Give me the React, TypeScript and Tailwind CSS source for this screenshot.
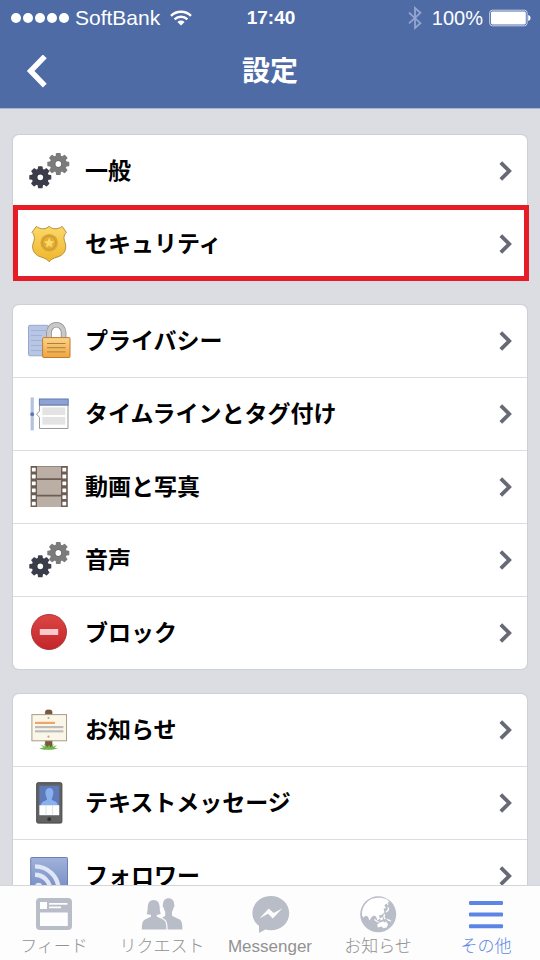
import { ReactNode } from "react";
import clsx from "clsx";

const TOOTH_ANGLES = [0, 45, 90, 135, 180, 225, 270, 315];

function Gear({ x, y, fill }: { x: number; y: number; fill: string }) {
  return (
    <g transform={`translate(${x} ${y})`}>
      <circle r="5.7" fill="none" stroke={fill} strokeWidth="5.6" />
      {TOOTH_ANGLES.map((angle) => (
        <path key={angle} d="M-2.8 -7 L-2.3 -10.4 Q-2.2 -11 -1.6 -11 H1.6 Q2.2 -11 2.3 -10.4 L2.8 -7Z" fill={fill} transform={`rotate(${angle})`} />
      ))}
      <circle r="3.4" fill="none" stroke="#00000022" strokeWidth="1" />
    </g>
  );
}

function GearsIcon() {
  return (
    <svg viewBox="0 0 44 44" className="size-11">
      <Gear x={31.3} y={15} fill="#7b7b7c" />
      <Gear x={13.3} y={28.3} fill="#3b3d4b" />
    </svg>
  );
}

function BadgeIcon() {
  return (
    <svg viewBox="0 0 44 44" className="size-11">
      <defs>
        <linearGradient id="badge" x1="0" y1="0" x2="0" y2="1">
          <stop offset="0" stopColor="#fbd96a" />
          <stop offset="1" stopColor="#efb52c" />
        </linearGradient>
      </defs>
      <path
        d="M22.2 4.2 C19.5 7.4 13.5 7.8 9.3 4.4 L5 10.4 C8.2 13.5 7.8 17 6.2 21 C4 28.5 8.5 33.6 14.5 35.2 C18 36.2 20.8 37.6 22.2 39.8 C23.6 37.6 26.4 36.2 29.9 35.2 C35.9 33.6 40.4 28.5 38.2 21 C36.6 17 36.2 13.5 39.4 10.4 L35.1 4.4 C30.9 7.8 24.9 7.4 22.2 4.2Z"
        fill="url(#badge)"
        stroke="#b78f3a"
        strokeWidth="1"
      />
      <circle cx="22.2" cy="20.8" r="8.8" fill="#d9a632" />
      <circle cx="22.2" cy="20.8" r="6.6" fill="#e3ae33" stroke="#c4942c" strokeWidth=".7" />
      <path d="M22.2 15.6 L23.7 19.1 L27.5 19.4 L24.6 21.9 L25.5 25.6 L22.2 23.6 L18.9 25.6 L19.8 21.9 L16.9 19.4 L20.7 19.1Z" fill="#fcd968" />
    </svg>
  );
}

function PrivacyIcon() {
  return (
    <svg viewBox="0 0 44 44" className="size-11">
      <defs>
        <linearGradient id="lock" x1="0" y1="0" x2="0" y2="1">
          <stop offset="0" stopColor="#fcd389" />
          <stop offset="1" stopColor="#f1a540" />
        </linearGradient>
      </defs>
      <rect x="1.5" y="6.3" width="20" height="30.5" rx="1.5" fill="#b8c6e3" stroke="#95a7cf" />
      <path d="M4 11.5H19M4 16.5H15M4 21.5H15M4 26.5H15M4 31.5H15" stroke="#9fb1d8" strokeWidth="1.2" />
      <path d="M22 20V13.5a7.3 7.8 0 0 1 14.6 0V20" fill="none" stroke="#8f8f8f" strokeWidth="5.6" />
      <path d="M22 20V13.5a7.3 7.8 0 0 1 14.6 0V20" fill="none" stroke="#c9c9c9" strokeWidth="4" />
      <rect x="15.6" y="18.6" width="27.4" height="19.9" rx="1" fill="url(#lock)" stroke="#bb7d34" />
      <path d="M20 24.5H38.5M20 28.7H38.5M20 32.9H38.5" stroke="#a8803f" strokeWidth="1" />
    </svg>
  );
}

function TimelineIcon() {
  return (
    <svg viewBox="0 0 44 44" className="size-11">
      <rect x="3.6" y="5.4" width="3.2" height="33" fill="#b4c2df" />
      <circle cx="5.2" cy="22.2" r="1.9" fill="#5876b4" />
      <path d="M12.5 13V19L9.6 22.2L12.5 25.4V36.5H41V13Z" fill="#fdfdfd" stroke="#9a9a9a" strokeWidth="1" />
      <rect x="12.4" y="7" width="28.8" height="6" fill="#8ea3d3" stroke="#6079b2" strokeWidth="1" />
      <rect x="15.4" y="15.4" width="22.8" height="7.6" fill="#e3e3e3" />
      <rect x="15.4" y="25" width="22.8" height="7.6" fill="#e3e3e3" />
    </svg>
  );
}

const FILM_HOLES = [2.8, 9.6, 16.4, 23.4, 30.2, 36.8];

function FilmIcon() {
  return (
    <svg viewBox="0 0 44 44" className="size-11">
      <rect x="3.6" y="1" width="37.2" height="41" fill="#6c5d55" />
      <path d="M10 1.5H34V13.2H10ZM10 15H34V29.8H10ZM10 31.6H34V42H10Z" fill="#bbaea5" />
      {FILM_HOLES.map((y) => (
        <g key={y} fill="#fff">
          <rect x="4.9" y={y} width="3.8" height="3.8" rx=".6" />
          <rect x="35.4" y={y} width="3.8" height="3.8" rx=".6" />
        </g>
      ))}
    </svg>
  );
}

function BlockIcon() {
  return (
    <svg viewBox="0 0 44 44" className="size-11">
      <defs>
        <linearGradient id="block" x1="0" y1="0" x2="0" y2="1">
          <stop offset="0" stopColor="#dc4644" />
          <stop offset="1" stopColor="#c3262a" />
        </linearGradient>
      </defs>
      <circle cx="22" cy="21" r="17.5" fill="url(#block)" stroke="#a62f2f" strokeWidth=".9" />
      <rect x="12.8" y="18" width="18.4" height="6" fill="#fbc9cc" />
    </svg>
  );
}

function SignIcon() {
  return (
    <svg viewBox="0 0 44 44" className="size-11">
      <path d="M18.4 40V4Q18.4 2 20.4 2H23Q25 2 25 4V40Z" fill="#7b573c" stroke="#5d4330" strokeWidth=".6" />
      <rect x="4.9" y="6.6" width="34.6" height="26.2" fill="#faf6e8" stroke="#a79d89" strokeWidth="1" />
      <rect x="8" y="13.8" width="20" height="2.2" fill="#f2a468" />
      <rect x="8" y="18" width="28.4" height="2.2" fill="#bcbcbc" />
      <rect x="8" y="22.2" width="28.4" height="2.2" fill="#bcbcbc" />
      <circle cx="21.5" cy="10" r="1.1" fill="#c4a774" />
      <circle cx="21.5" cy="28.7" r="1.1" fill="#c4a774" />
      <path d="M12 40.5L16.6 39.6L13.4 36.6L18 38.8L17.2 35.4L20.4 39L22 37L23.6 39.2L26.6 35.6L26 38.8L30 37L27.4 39.8L31 40.4L25 41.8H17Z" fill="#6fb44c" />
    </svg>
  );
}

function PhoneIcon() {
  return (
    <svg viewBox="0 0 44 44" className="size-11">
      <rect x="9.7" y="1.7" width="25.2" height="40.4" rx="1.4" fill="#626262" stroke="#474747" />
      <rect x="12.4" y="4.8" width="19.8" height="29.4" fill="#5d7abb" />
      <path d="M14 24.2C14.4 20.6 17.4 20 20 19C20.4 17.6 18.4 15 18.4 11.8C18.4 8.8 20 7 22.4 7C24.8 7 26.4 8.8 26.4 11.8C26.4 15 24.4 17.6 24.8 19C27.4 20 30.4 20.6 30.8 24.2Z" fill="#8bb0ee" />
      <rect x="12.4" y="24.2" width="19.8" height="10" fill="#fff" />
      <path d="M19 24.2V34.2M25.6 24.2V34.2" stroke="#d8d8d8" strokeWidth=".8" />
      <circle cx="22.2" cy="38.2" r="1.9" fill="#333" />
    </svg>
  );
}

function FollowerIcon() {
  return (
    <svg viewBox="0 0 44 44" className="size-11">
      <defs>
        <linearGradient id="feed" x1="0" y1="0" x2="0" y2="1">
          <stop offset="0" stopColor="#a0b2da" />
          <stop offset="1" stopColor="#7189c2" />
        </linearGradient>
      </defs>
      <rect x="3.7" y="3.5" width="36.8" height="36.8" rx=".8" fill="url(#feed)" stroke="#6a80b6" />
      <path d="M8 12.4A23.6 23.6 0 0 1 31.6 36M8 20.8A15.2 15.2 0 0 1 23.2 36" fill="none" stroke="#dfe6f5" strokeWidth="4.4" />
      <circle cx="11.6" cy="32.4" r="3.6" fill="#dfe6f5" />
    </svg>
  );
}

function FeedTabIcon() {
  return (
    <svg viewBox="0 0 44 38" className="h-[38px] w-11" fill="currentColor">
      <path
        fillRule="evenodd"
        d="M8 2H36Q40 2 40 6V30Q40 34 36 34H8Q4 34 4 30V6Q4 2 8 2ZM8 6V13H15V6ZM17 7V8.8H35.4V7ZM17 10.4V12.2H29V10.4ZM8 16.6V30H35.8V16.6Z"
      />
    </svg>
  );
}

function RequestsTabIcon() {
  return (
    <svg viewBox="0 0 44 38" className="h-[38px] w-11" fill="currentColor">
      <path d="M23 8.5C23 4.6 25 2.2 28.6 2.2C32.2 2.2 34.2 4.6 34.2 8.5C34.8 9.4 34.4 11 33.6 11.6C33.2 13.6 32.6 14.8 32 15.8V19.6C34 21.8 38.6 22 41 24.8C42.2 26.6 42.4 30 42.4 33.4H24V24L22.2 21.6C23.4 21 24.8 20.6 25.2 19.6V15.8C24.6 14.8 24 13.6 23.6 11.6C22.6 11 22.4 9.4 23 8.5Z" />
      <path
        d="M13.6 4C17.4 4 19.4 6.8 19.6 10.4C19.8 13.8 20.2 16.4 20.8 17.8C19.8 18.4 18.2 18.8 16.8 18.8V20.6C19 22.4 23 22.6 25 25C26.2 27 26.4 30 26.4 33.4H1.8C1.8 30 2 27 3.2 25C5.2 22.6 9.2 22.4 11 20.6V18.8C9.6 18.8 7.6 18.4 6.6 17.8C7.4 16.4 7.6 13.8 7.8 10.4C8 6.8 10 4 13.6 4Z"
        stroke="#fdfdfd"
        strokeWidth="2.4"
        paintOrder="stroke"
      />
    </svg>
  );
}

function MessengerTabIcon() {
  return (
    <svg viewBox="0 0 44 38" className="h-[38px] w-11">
      <path d="M22.8 0C12.6 0 4.4 7.6 4.4 17.2C4.4 22.4 6.8 26.8 11 30V37L17.4 33.6C19 34.1 20.8 34.3 22.8 34.3C33 34.3 41.2 26.8 41.2 17.2C41.2 7.6 33 0 22.8 0Z" fill="currentColor" />
      <path d="M11.4 22.4L20.8 12.4L25.6 17L34.2 12.4L24.8 22.4L20 17.8Z" fill="#fdfdfd" />
    </svg>
  );
}

function GlobeTabIcon() {
  return (
    <svg viewBox="0 0 44 38" className="h-[38px] w-11">
      <circle cx="22.2" cy="18.3" r="18" fill="currentColor" />
      <path
        d="M6 19.5C5.4 12 10 5 17 2.6C21.4 1.2 26.6 1.2 31 3.6L33.6 6.2L31.6 6.6L32.6 10L30.2 7.6L28.4 9.4L30 12L27.6 12.8L28.4 16.4L25.4 19L22.8 19.6L24 22.6L21.6 24.6L20 20.6L17.8 19.4L15.4 21.2L13.6 24.4L11.8 20.6L9.6 19.8L7.4 21.6Z"
        fill="#fff"
      />
      <path d="M31.6 10.6L33.4 12.4L32.4 15L30 16.8L29.6 15.6L31.6 13.8Z" fill="#fff" />
      <path d="M28 17.4L29.4 19L28.6 21.2L30 22.6L28.4 23.4L27.2 20.6ZM24 22.2L26.6 21L27 23.4L24.8 24.6ZM18.4 22.4L22 25.4L24.4 26L22 26.6L18.6 24.4Z" fill="#fff" />
      <path d="M30 22.6L34.4 24L35.4 25.8L31.6 24.6Z" fill="#fff" />
      <path d="M21.2 28.6L24 26.4L27.2 25.4L28.8 26.4L30 25.2L32 28.4L30.6 31.6L27.6 32.2L25.4 30.6L21.8 31.4Z" fill="#fff" />
    </svg>
  );
}

function MoreTabIcon() {
  return (
    <svg viewBox="0 0 44 38" className="h-[38px] w-11" fill="currentColor">
      <rect x="5" y="5" width="34" height="4" rx="1" />
      <rect x="5" y="16.6" width="34" height="4" rx="1" />
      <rect x="5" y="28.2" width="34" height="4" rx="1" />
    </svg>
  );
}

type Item = { label: string; icon: ReactNode; highlighted?: boolean };

const groups: Item[][] = [
  [
    { label: "一般", icon: <GearsIcon /> },
    { label: "セキュリティ", icon: <BadgeIcon />, highlighted: true },
  ],
  [
    { label: "プライバシー", icon: <PrivacyIcon /> },
    { label: "タイムラインとタグ付け", icon: <TimelineIcon /> },
    { label: "動画と写真", icon: <FilmIcon /> },
    { label: "音声", icon: <GearsIcon /> },
    { label: "ブロック", icon: <BlockIcon /> },
  ],
  [
    { label: "お知らせ", icon: <SignIcon /> },
    { label: "テキストメッセージ", icon: <PhoneIcon /> },
    { label: "フォロワー", icon: <FollowerIcon /> },
  ],
];

const tabs = [
  { label: "フィード", icon: FeedTabIcon },
  { label: "リクエスト", icon: RequestsTabIcon },
  { label: "Messenger", icon: MessengerTabIcon },
  { label: "お知らせ", icon: GlobeTabIcon },
  { label: "その他", icon: MoreTabIcon, active: true },
];

function StatusBar() {
  return (
    <div className="grid h-9 grid-cols-[1fr_auto_1fr] items-center pl-[11px] pr-[9px] text-xl">
      <div className="flex items-center">
        <div className="flex gap-0.5">
          {[1, 2, 3, 4, 5].map((n) => (
            <span key={n} className="size-2.5 rounded-full bg-white" />
          ))}
        </div>
        <span className="ml-1.5 text-[21px]">SoftBank</span>
        <svg viewBox="0 0 22 16" className="ml-2.5 h-4 w-[22px]" fill="none" stroke="#fff" strokeWidth="2.4">
          <path d="M1 5.8A14.2 14.2 0 0 1 21 5.8" />
          <path d="M4.6 9.4A9.2 9.2 0 0 1 17.4 9.4" />
          <path d="M11 15.6L7.4 12A5.2 5.2 0 0 1 14.6 12Z" fill="#fff" stroke="none" />
        </svg>
      </div>
      <span className="text-[19px] font-bold">17:40</span>
      <div className="flex items-center justify-end">
        <svg viewBox="0 0 14 24" className="mr-2.5 h-6 w-3.5" fill="none" stroke="#93a6cf" strokeWidth="1.8">
          <path d="M1 6.6L12.4 17.2L7 22V2L12.4 6.8L1 17.4" />
        </svg>
        <span>100%</span>
        <svg viewBox="0 0 42 18" className="ml-1.5 h-[18px] w-[42px]">
          <rect x=".7" y="1.2" width="37.4" height="15.6" rx="2.6" fill="none" stroke="#c8d3ea" strokeWidth="1" />
          <rect x="2" y="2.5" width="34.8" height="13" rx="1.4" fill="#fff" />
          <path d="M39.2 6Q41.6 6.6 41.6 9Q41.6 11.4 39.2 12Z" fill="#fff" />
        </svg>
      </div>
    </div>
  );
}

function SettingsRow({ item }: { item: Item }) {
  return (
    <li className="relative border-b border-[#dcdde1] last:border-b-0">
      <a href="#" className="flex h-[72px] items-center px-3.5">
        {item.icon}
        <span className="ml-3.5 flex-1 text-[23px] font-bold text-black">{item.label}</span>
        <svg viewBox="0 0 14 20" className="h-5 w-3.5" fill="none" stroke="#666a77" strokeWidth="3.8">
          <path d="M1.8 1.6L10.2 10L1.8 18.4" />
        </svg>
      </a>
      {item.highlighted && (
        <span className="pointer-events-none absolute -top-[3px] -right-0.5 -bottom-px left-0 border-5 border-[#e61c26]" />
      )}
    </li>
  );
}

export default function App() {
  return (
    <div className="flex h-screen flex-col bg-[#dbdde3] font-['Liberation_Sans','Noto_Sans_CJK_JP',sans-serif]">
      <header className="shrink-0 border-b border-[#a9b5d0] bg-[#4e6ba5] text-white">
        <StatusBar />
        <div className="grid h-[72px] grid-cols-[1fr_auto_1fr] items-center">
          <button type="button" aria-label="戻る" className="ml-[26px] w-fit">
            <svg viewBox="0 0 22 34" className="h-[34px] w-[22px]" fill="none" stroke="#fff" strokeWidth="5.4">
              <path d="M18.8 1.4L4.6 16L18.8 30.6" />
            </svg>
          </button>
          <h1 className="text-[28px] font-bold">設定</h1>
        </div>
      </header>

      <main className="flex min-h-0 flex-1 flex-col gap-[25px] overflow-hidden px-[13px] pt-[26px]">
        {groups.map((group, i) => (
          <ul key={i} className="shrink-0 rounded-md bg-white shadow-[0_0_1px_1px_#cdcfd5]">
            {group.map((item) => (
              <SettingsRow key={item.label} item={item} />
            ))}
          </ul>
        ))}
      </main>

      <nav className="grid h-[75px] shrink-0 grid-cols-5 border-t border-[#d4d5d9] bg-[#fdfdfd] pt-2.5">
        {tabs.map((tab) => (
          <a key={tab.label} href="#" className={clsx("flex flex-col items-center", tab.active ? "text-[#5c86e6]" : "text-[#b9bdc8]")}>
            <tab.icon />
            <span className={clsx("text-[17px] leading-[26px] font-light whitespace-nowrap", !tab.active && "text-[#929292]")}>{tab.label}</span>
          </a>
        ))}
      </nav>
    </div>
  );
}
